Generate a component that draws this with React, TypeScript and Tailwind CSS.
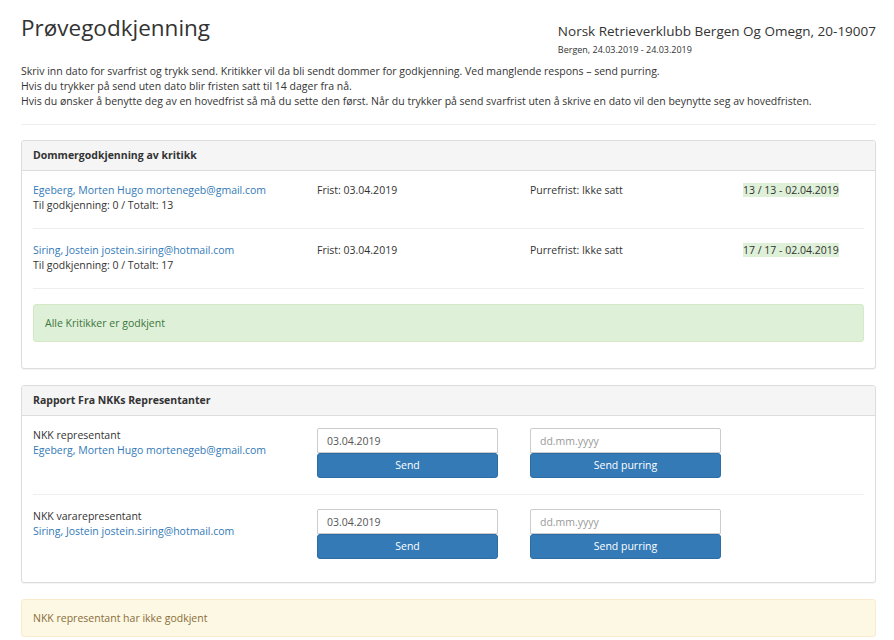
import { ReactNode } from "react";

function Panel({ title, children }: { title: string; children: ReactNode }) {
  return (
    <div className="rounded-[3px] border border-[#ddd] bg-white shadow-[0_1px_1px_rgba(0,0,0,0.05)]">
      <div className="rounded-t-[3px] border-b border-[#ddd] bg-[#f5f5f5] px-[11px] py-[7px] font-bold leading-[15px]">
        {title}
      </div>
      {children}
    </div>
  );
}

const judges = [
  {
    name: "Egeberg, Morten Hugo mortenegeb@gmail.com",
    total: 13,
    status: "13 / 13 - 02.04.2019",
  },
  {
    name: "Siring, Jostein jostein.siring@hotmail.com",
    total: 17,
    status: "17 / 17 - 02.04.2019",
  },
];

const reps = [
  { role: "NKK representant", name: "Egeberg, Morten Hugo mortenegeb@gmail.com" },
  { role: "NKK vararepresentant", name: "Siring, Jostein jostein.siring@hotmail.com" },
];

function DateSend({
  value,
  label,
  width,
}: {
  value?: string;
  label: string;
  width: string;
}) {
  return (
    <div className={width}>
      <input
        type="text"
        defaultValue={value}
        placeholder="dd.mm.yyyy"
        className="block h-[25px] w-full rounded-t-[2px] border border-[#ccc] bg-white px-[9px] text-[#555] outline-none placeholder:text-[#999]"
      />
      <button
        type="button"
        className="block h-[25px] w-full rounded-[3px] border border-[#2e6da4] bg-[#337ab7] text-center text-white"
      >
        {label}
      </button>
    </div>
  );
}

export default function App() {
  return (
    <div className="min-h-screen bg-white pl-[21px] pr-[18px] font-['Open_Sans',sans-serif] text-[10.5px] leading-[15px] text-[#333]">
      <header className="flex items-start justify-between">
        <h1 className="pt-[15px] text-[22.5px] font-normal leading-[25px]">Prøvegodkjenning</h1>
        <div className="pt-[23px]">
          <h4 className="text-[13.5px] leading-[16px]">
            Norsk Retrieverklubb Bergen Og Omegn, 20-19007
          </h4>
          <div className="mt-[5px] text-[9px] leading-[12px]">Bergen, 24.03.2019 - 24.03.2019</div>
        </div>
      </header>

      <div className="mt-[8px]">
        <p>
          Skriv inn dato for svarfrist og trykk send. Kritikker vil da bli sendt dommer for godkjenning. Ved
          manglende respons – send purring.
        </p>
        <p>Hvis du trykker på send uten dato blir fristen satt til 14 dager fra nå.</p>
        <p>
          Hvis du ønsker å benytte deg av en hovedfrist så må du sette den først. Når du trykker på send svarfrist
          uten å skrive en dato vil den beynytte seg av hovedfristen.
        </p>
      </div>

      <hr className="mt-[15px] border-t border-[#eee]" />

      <div className="mt-[15px]">
        <Panel title="Dommergodkjenning av kritikk">
          <div className="px-[11px] pb-[26px] pt-[12px]">
            {judges.map((j, i) => (
              <div
                key={j.name}
                className={`grid grid-cols-[284px_213px_213px_1fr] border-b border-[#eee] pb-[15px] ${
                  i > 0 ? "pt-[14px]" : ""
                }`}
              >
                <div>
                  <a className="text-[#337ab7]">{j.name}</a>
                  <div>Til godkjenning: 0 / Totalt: {j.total}</div>
                </div>
                <div>Frist: 03.04.2019</div>
                <div>Purrefrist: Ikke satt</div>
                <div>
                  <span className="bg-[#dff0d8]">{j.status}</span>
                </div>
              </div>
            ))}
            <div className="mt-[15px] rounded-[3px] border border-[#d6e9c6] bg-[#dff0d8] px-[11px] py-[10px] leading-[16px] text-[#3c763d]">
              Alle Kritikker er godkjent
            </div>
          </div>
        </Panel>
      </div>

      <div className="mt-[16px]">
        <Panel title="Rapport Fra NKKs Representanter">
          <div className="px-[11px] pb-[23px] pt-[12px]">
            {reps.map((r, i) => (
              <div
                key={r.role}
                className={`grid grid-cols-[284px_213px_213px_1fr] ${
                  i === 0 ? "border-b border-[#eee] pb-[16px]" : "pt-[14px]"
                }`}
              >
                <div>
                  <div>{r.role}</div>
                  <a className="text-[#337ab7]">{r.name}</a>
                </div>
                <DateSend value="03.04.2019" label="Send" width="w-[181px]" />
                <DateSend label="Send purring" width="w-[191px]" />
                <div />
              </div>
            ))}
          </div>
        </Panel>
      </div>

      <div className="mt-[16px] rounded-[3px] border border-[#faebcc] bg-[#fcf8e3] px-[11px] py-[10px] leading-[16px] text-[#8a6d3b]">
        NKK representant har ikke godkjent
      </div>
    </div>
  );
}
